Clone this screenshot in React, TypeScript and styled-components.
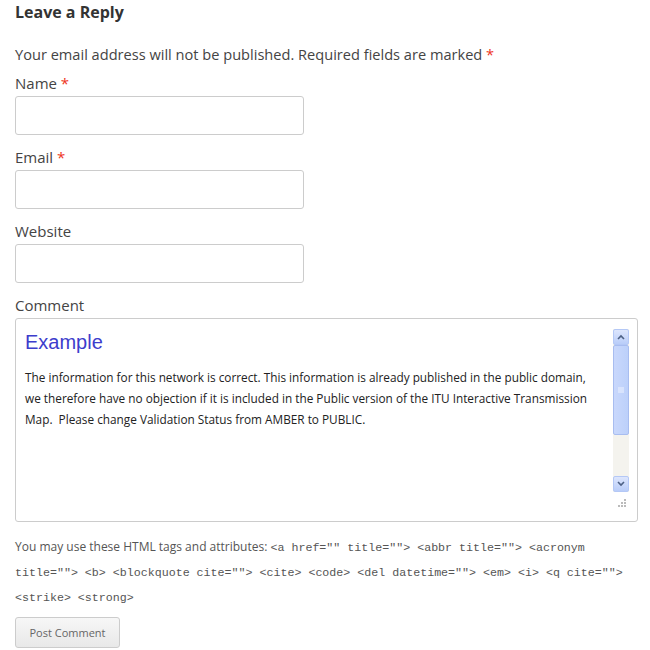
import React from 'react'
import styled, { createGlobalStyle } from 'styled-components'

const GlobalStyle = createGlobalStyle`
    body {
        margin: 0;
        background: #fff;
        font-family: "Open Sans", "Liberation Sans", sans-serif;
        color: #444;
    }
`

const Page = styled.div`
    padding: 0 12px 0 15px;
    width: 623px;
`

const Title = styled.h3`
    margin: 0;
    padding-top: 1px;
    font-size: 16px;
    line-height: 22px;
    font-weight: 700;
    color: #333;
`

const Notes = styled.p`
    margin: 19px 0 0;
    font-size: 14.6px;
    line-height: 24px;
`

const Req = styled.span`
    color: #e32;
`

const Field = styled.div`
    margin-top: 8px;
    & + & {
        margin-top: 13px;
    }
`

const Label = styled.label`
    display: block;
    font-size: 15px;
    line-height: 18px;
    margin-bottom: 4px;
`

const Input = styled.div`
    width: 287px;
    height: 37px;
    border: 1px solid #ccc;
    border-radius: 3px;
    background: #fff;
`

const Area = styled.div`
    display: flex;
    height: 202px;
    border: 1px solid #ccc;
    border-radius: 3px;
    background: #fff;
    margin-top: 4px;
`

const AreaBody = styled.div`
    flex: 1;
    padding: 11px 10px 0 9px;
`

const Heading = styled.div`
    font-family: "Liberation Sans", Arial, sans-serif;
    font-size: 20px;
    line-height: 24px;
    color: #3d3dcc;
    margin-bottom: 13px;
`

const BodyText = styled.div`
    font-size: 11.8px;
    line-height: 21px;
    color: #222;
`

const Side = styled.div`
    display: flex;
    flex-direction: column;
    align-items: center;
    width: 26px;
    padding-top: 10px;
`

const Scroll = styled.div`
    width: 16px;
    height: 163px;
    display: flex;
    flex-direction: column;
    background: #f4f3ee;
    margin-left: -7px;
`

const ArrowBtn = styled.div`
    height: 16px;
    box-sizing: border-box;
    border: 1px solid #b4c8f6;
    border-radius: 2px;
    background: linear-gradient(#dde6fd, #b9cdf9);
    display: flex;
    align-items: center;
    justify-content: center;
`

const Thumb = styled.div`
    height: 90px;
    box-sizing: border-box;
    border: 1px solid #a8bdf0;
    border-radius: 2px;
    background: linear-gradient(90deg, #c9d8fc, #bcd0fa);
    display: flex;
    align-items: center;
    justify-content: center;
`

const Track = styled.div`
    flex: 1;
`

const Grip = styled.svg`
    margin: 6px 0 0 -4px;
`

const Tags = styled.p`
    margin: 13px 0 0;
    font-size: 12px;
    line-height: 24px;
    color: #555;
`

const Code = styled.code`
    font-family: "Liberation Mono", "Courier New", monospace;
    font-size: 11.65px;
`

const Button = styled.button`
    margin-top: 7px;
    width: 105px;
    height: 31px;
    border: 1px solid #ccc;
    border-radius: 3px;
    background: linear-gradient(#f7f7f7, #e8e8e8);
    font-family: "Open Sans", "Liberation Sans", sans-serif;
    font-size: 11px;
    color: #666;
    padding: 0;
`

const Chevron = ({ up }: { up?: boolean }) => (
    <svg width="8" height="6" viewBox="0 0 8 6">
        <path d={up ? 'M1 5 L4 2 L7 5' : 'M1 1 L4 4 L7 1'} stroke="#4d6185" strokeWidth="1.6" fill="none" />
    </svg>
)

export default function App() {
    return (
        <Page>
            <GlobalStyle />
            <Title>Leave a Reply</Title>
            <Notes>
                Your email address will not be published. Required fields are marked <Req>*</Req>
            </Notes>
            <Field>
                <Label>Name <Req>*</Req></Label>
                <Input />
            </Field>
            <Field>
                <Label>Email <Req>*</Req></Label>
                <Input />
            </Field>
            <Field>
                <Label>Website</Label>
                <Input />
            </Field>
            <Field>
                <Label>Comment</Label>
                <Area>
                    <AreaBody>
                        <Heading>Example</Heading>
                        <BodyText>
                            The information for this network is correct. This information is already published in the public domain,
                            we therefore have no objection if it is included in the Public version of the ITU Interactive Transmission
                            Map.&nbsp; Please change Validation Status from AMBER to PUBLIC.
                        </BodyText>
                    </AreaBody>
                    <Side>
                        <Scroll>
                            <ArrowBtn><Chevron up /></ArrowBtn>
                            <Thumb>
                                <svg width="6" height="7" viewBox="0 0 6 7">
                                    <path d="M0 1h6M0 3h6M0 5h6" stroke="#eef3ff" strokeWidth="1" />
                                </svg>
                            </Thumb>
                            <Track />
                            <ArrowBtn><Chevron /></ArrowBtn>
                        </Scroll>
                        <Grip width="10" height="10" viewBox="0 0 10 10">
                            <rect x="7" y="1" width="2" height="2" fill="#bbb" />
                            <rect x="4" y="4" width="2" height="2" fill="#bbb" />
                            <rect x="7" y="4" width="2" height="2" fill="#bbb" />
                            <rect x="1" y="7" width="2" height="2" fill="#bbb" />
                            <rect x="4" y="7" width="2" height="2" fill="#bbb" />
                            <rect x="7" y="7" width="2" height="2" fill="#bbb" />
                        </Grip>
                    </Side>
                </Area>
            </Field>
            <Tags>
                You may use these HTML tags and attributes: <Code>&lt;a href="" title=""&gt; &lt;abbr title=""&gt; &lt;acronym title=""&gt; &lt;b&gt; &lt;blockquote cite=""&gt; &lt;cite&gt; &lt;code&gt; &lt;del datetime=""&gt; &lt;em&gt; &lt;i&gt; &lt;q cite=""&gt; &lt;strike&gt; &lt;strong&gt;</Code>
            </Tags>
            <Button>Post Comment</Button>
        </Page>
    )
}
